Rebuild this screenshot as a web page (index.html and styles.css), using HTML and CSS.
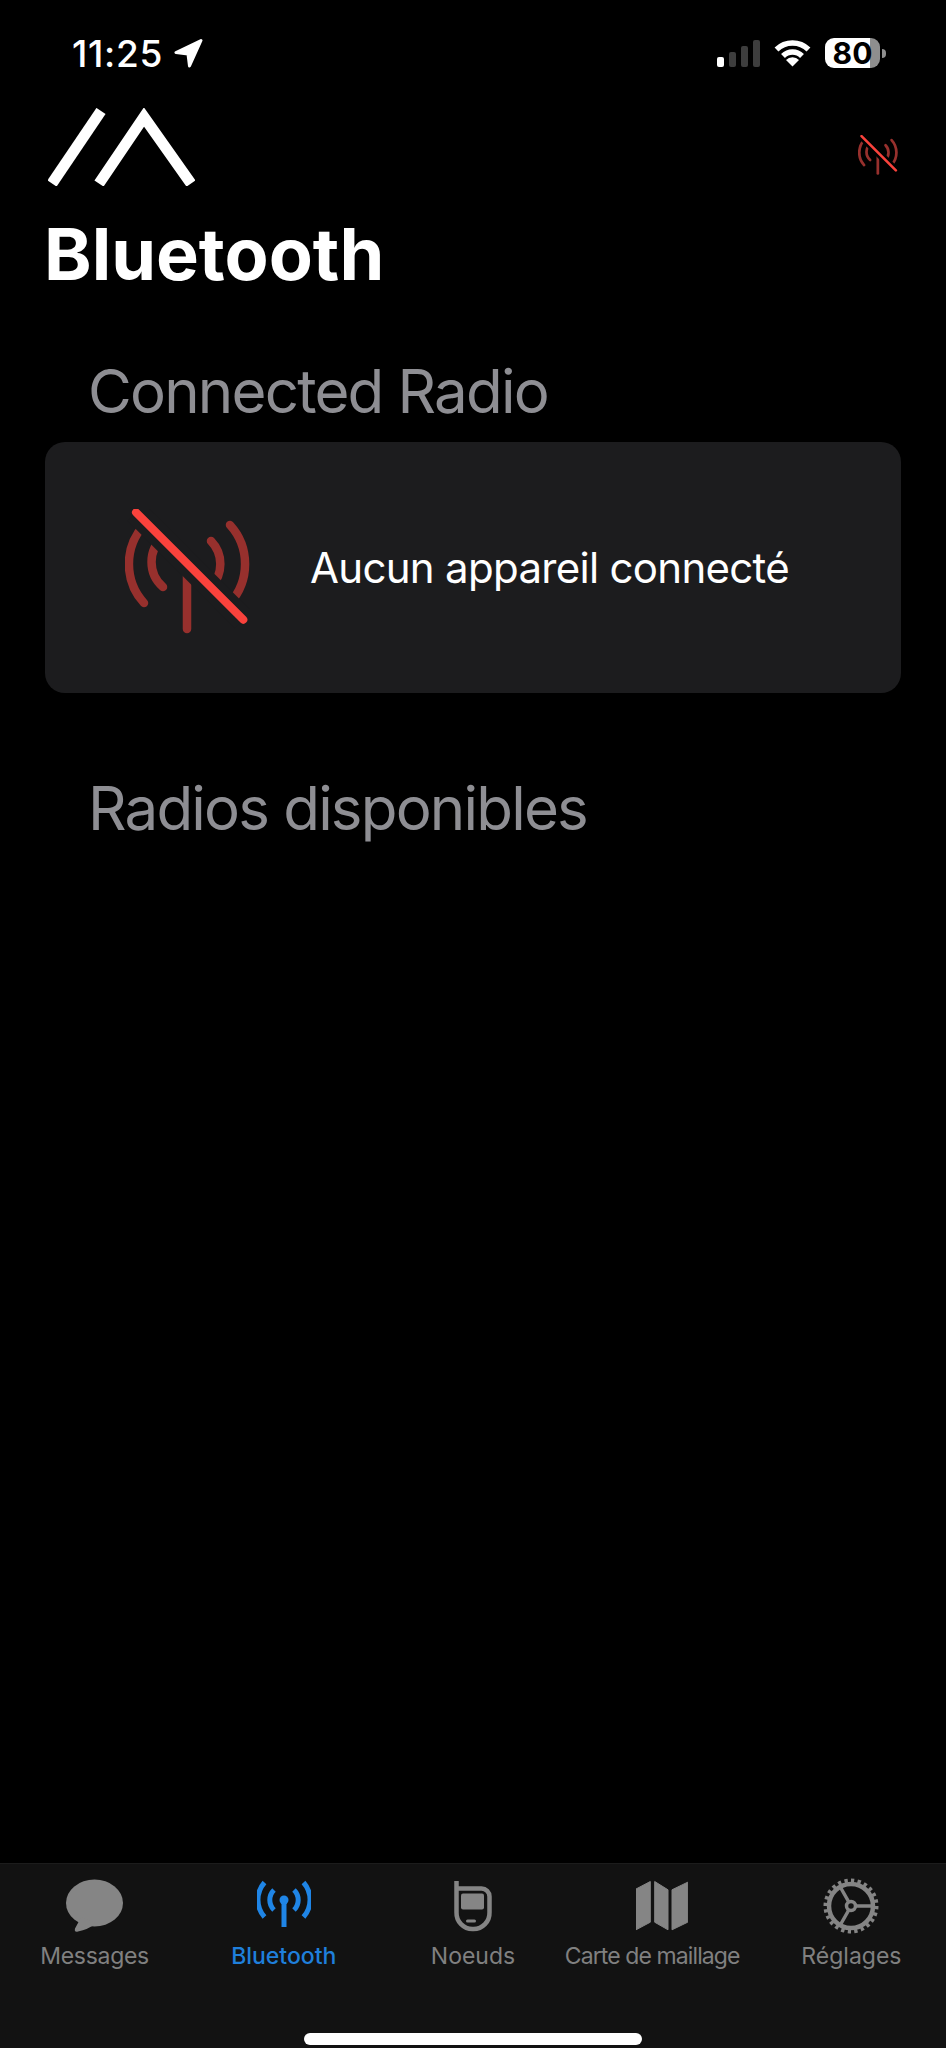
FILE: index.html
```html
<!DOCTYPE html>
<html lang="en">
<head>
    <meta charset="UTF-8">
    <meta name="viewport" content="width=device-width, initial-scale=1.0">
    <title>Bluetooth</title>
    <link rel="stylesheet" href="styles.css">
</head>
<body>
    <svg class="defs" width="0" height="0">
        <symbol id="no-radio" viewBox="0 0 125 125">
            <g class="radio-waves">
                <path d="M19 16 A58 58 0 0 0 19 94"/>
                <path d="M105 16 A58 58 0 0 1 105 94"/>
                <path d="M38 28 A33 33 0 0 0 38 78"/>
                <path d="M86 32 A33 33 0 0 1 86 78"/>
                <path d="M62 55 V120"/>
            </g>
            <path class="radio-gap" d="M11 3.3 L118.3 110.7"/>
            <path class="radio-slash" d="M11 3.3 L118.3 110.7"/>
        </symbol>
    </svg>

    <div class="status">
        <div class="status-left">
            <span class="time">11:25</span>
            <svg class="arrow" width="29" height="29" viewBox="0 0 29 29"><path d="M27 1.5 L2 13.5 L14 15 L15.500 27 Z"/></svg>
        </div>
        <div class="status-right">
            <div class="signal">
                <i class="bar on b1"></i><i class="bar b2"></i><i class="bar b3"></i><i class="bar b4"></i>
            </div>
            <svg class="wifi" width="37" height="27" viewBox="0 0 37 27">
                <path d="M2.500 9.500 A23 23 0 0 1 34.500 9.500"/>
                <path d="M9 16 A13.500 13.500 0 0 1 28 16"/>
                <path class="wifi-dot" d="M18.500 26.500 L12 20 A9 9 0 0 1 25 20 Z"/>
            </svg>
            <div class="battery">80</div>
            <div class="battery-cap"></div>
        </div>
    </div>

    <div class="top">
        <svg class="logo" width="147" height="78" viewBox="0 0 147 78">
            <path d="M4 75.500 L53 3"/>
            <path d="M51 75.500 L96 9 L143 75.500"/>
        </svg>
        <svg class="top-icon"><use href="#no-radio"/></svg>
    </div>

    <main class="content">
        <h1>Bluetooth</h1>
        <h2 class="section-title">Connected Radio</h2>
        <div class="card">
            <svg class="card-icon"><use href="#no-radio"/></svg>
            <span>Aucun appareil connecté</span>
        </div>
        <h2 class="section-title second">Radios disponibles</h2>
    </main>

    <nav class="tabbar">
        <div class="tabs">
            <div class="tab tab-messages">
                <svg width="57" height="53" viewBox="0 0 57 53">
                    <ellipse cx="28.500" cy="23.500" rx="28.500" ry="23.500"/>
                    <path d="M15 38 L9 49 Q8 53 12 52 Q22 50 30 44 Z"/>
                </svg>
                <span>Messages</span>
            </div>
            <div class="tab active">
                <svg width="54" height="48" viewBox="0 0 54 48">
                    <g class="line">
                        <path d="M7.500 .5 A26 26 0 0 0 7.500 35"/>
                        <path d="M46.500 .5 A26 26 0 0 1 46.500 35"/>
                        <path d="M17 8 A14 14 0 0 0 17 28"/>
                        <path d="M37 8 A14 14 0 0 1 37 28"/>
                        <path d="M27 19 V45"/>
                    </g>
                    <circle cx="27" cy="18" r="4.500"/>
                </svg>
                <span>Bluetooth</span>
            </div>
            <div class="tab">
                <svg width="38" height="53" viewBox="0 0 38 53">
                    <path class="line" d="M2.500 1.500 V33 A16 16 0 0 0 18.500 49.500 H19.500 A16 16 0 0 0 35.500 33 V17 A8 8 0 0 0 27.500 9 H2.500"/>
                    <rect x="7" y="14" width="23" height="16" rx="2"/>
                    <rect x="12" y="40" width="10" height="3" rx="1.500"/>
                </svg>
                <span>Noeuds</span>
            </div>
            <div class="tab tab-map">
                <svg width="52" height="49" viewBox="0 0 52 49">
                    <path d="M0 7.500 L14.300 0 V40.700 L0 48.300 Z"/>
                    <path d="M18.700 0 L32 8.300 V48.300 L18.700 40.700 Z"/>
                    <path d="M36 8.300 L51.700 .7 V40.700 L36 48.300 Z"/>
                </svg>
                <span>Carte de maillage</span>
            </div>
            <div class="tab">
                <svg width="56" height="56" viewBox="0 0 56 56">
                    <g class="line">
                        <circle cx="28" cy="28" r="22" class="gear-ring"/>
                        <circle cx="28" cy="28" r="25.500" class="gear-teeth" pathLength="48"/>
                        <circle cx="28" cy="28" r="4.500" class="gear-spoke"/>
                        <path class="gear-spoke" d="M32.500 28 H50 M25.800 24 L17 8.500 M25.800 32 L17 47.500"/>
                    </g>
                </svg>
                <span>Réglages</span>
            </div>
        </div>
        <div class="home-bar"></div>
    </nav>
</body>
</html>
```

FILE: styles.css
```css
* {
    box-sizing: border-box;
}
body {
    font-family: Inter, "Liberation Sans", sans-serif;
    display: flex;
    flex-direction: column;
    height: 100vh;
    margin: 0;
    background: #000;
    color: #fff;
    overflow: hidden;
}
.defs {
    position: absolute;
}
.radio-waves path {
    fill: none;
    stroke: #97302d;
    stroke-width: 8.500;
    stroke-linecap: round;
}
.radio-gap {
    stroke: var(--gap);
    stroke-width: 24;
}
.radio-slash {
    stroke: #f9423c;
    stroke-width: 8;
    stroke-linecap: round;
}
.status {
    display: flex;
    justify-content: space-between;
    height: 30px;
    margin-top: 38px;
    padding: 0 60px 0 72px;
}
.status-left {
    display: flex;
    align-items: center;
    gap: 11px;
}
.time {
    margin-top: 1px;
    font-size: 37px;
    font-weight: 500;
    line-height: 30px;
    letter-spacing: .7px;
}
.arrow {
    margin-top: 1px;
}
.arrow path {
    fill: #fff;
    stroke: #fff;
    stroke-width: 3;
    stroke-linejoin: round;
}
.status-right {
    display: flex;
    align-items: center;
}
.signal {
    display: flex;
    align-items: flex-end;
    gap: 5px;
    height: 27px;
    margin-right: 14px;
}
.bar {
    width: 7px;
    border-radius: 2px;
    background: #3d3d3d;
}
.bar.on {
    background: #fff;
}
.b1 { height: 10px; }
.b2 { height: 15px; }
.b3 { height: 21px; }
.b4 { height: 27px; }
.wifi {
    margin-right: 14px;
}
.wifi path {
    fill: none;
    stroke: #fff;
    stroke-width: 5.5;
}
.wifi .wifi-dot {
    fill: #fff;
    stroke: none;
}
.battery {
    width: 55px;
    height: 30px;
    border-radius: 9px;
    background: linear-gradient(90deg, #fff 81%, #8e8e8e 81%);
    color: #000;
    font-size: 30px;
    font-weight: 700;
    line-height: 30px;
    text-align: center;
}
.battery-cap {
    width: 4px;
    height: 9px;
    margin-left: 2px;
    border-radius: 0 4px 4px 0;
    background: #8e8e8e;
}
.top {
    display: flex;
    justify-content: space-between;
    align-items: flex-start;
    margin-top: 40px;
    padding: 0 48px;
}
.logo path {
    fill: none;
    stroke: #fff;
    stroke-width: 11;
}
.top-icon {
    width: 40px;
    height: 40px;
    margin-top: 27px;
    --gap: #000;
}
.content {
    flex: 1;
    padding: 0 45px;
}
h1 {
    margin: 25px 0 0 -1px;
    font-size: 72px;
    font-weight: 700;
    line-height: 86px;
}
.section-title {
    margin: 59px 0 0 43px;
    font-size: 60px;
    font-weight: 400;
    line-height: 70px;
    letter-spacing: -1.800px;
    color: #8e8e93;
}
.section-title.second {
    margin-top: 80px;
}
.card {
    display: flex;
    align-items: center;
    gap: 60px;
    height: 251px;
    margin-top: 16px;
    padding-left: 80px;
    border-radius: 20px;
    background: #1c1c1e;
    font-size: 42px;
    line-height: 50px;
    letter-spacing: -.7px;
    --gap: #1c1c1e;
}
.card-icon {
    width: 125px;
    height: 125px;
    margin-top: 8px;
}
.tabbar {
    height: 185px;
    background: #121212;
    border-top: 1px solid #1c1c1c;
}
.tabs {
    display: grid;
    grid-template-columns: repeat(5, minmax(0, 1fr));
    padding-top: 14px;
}
.tab {
    display: flex;
    flex-direction: column;
    align-items: center;
    height: 106px;
    color: #808080;
    font-size: 23px;
    font-weight: 400;
    line-height: 28px;
}
.tab svg {
    display: block;
    height: 56px;
    margin-bottom: 8px;
    fill: #858585;
}
.tab .line,
.tab .line path,
.tab .line circle {
    fill: none;
    stroke: #858585;
    stroke-width: 4.500;
}
.tab.active {
    color: #1f7fdb;
    font-weight: 500;
}
.tab.active svg {
    fill: #1f85e6;
}
.tab.active .line path {
    stroke: #1f85e6;
    stroke-width: 5;
}
.tab-messages span {
    letter-spacing: -.3px;
}
.tab-map span {
    margin-right: 20px;
    letter-spacing: -.9px;
    white-space: nowrap;
}
.tab-map path {
    stroke: #858585;
    stroke-width: 1;
    stroke-linejoin: round;
}
.tab .line .gear-ring {
    stroke-width: 4.500;
}
.tab .line .gear-teeth {
    stroke-width: 4;
    stroke-dasharray: 1 1;
}
.tab .line .gear-spoke {
    stroke-width: 3.500;
}
.home-bar {
    width: 338px;
    height: 12px;
    margin: 49px auto 0;
    border-radius: 6px;
    background: #fff;
}
```
